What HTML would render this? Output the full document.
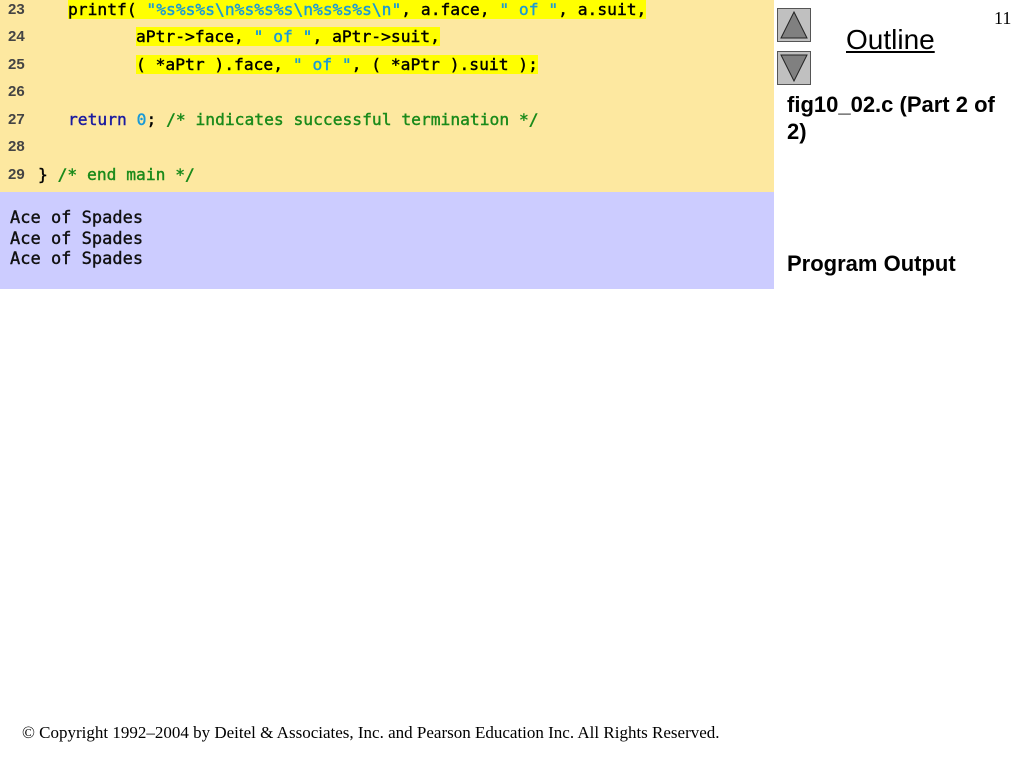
<!DOCTYPE html>
<html><head><meta charset="utf-8"><style>
body{margin:0;width:1024px;height:768px;background:#fff;position:relative;overflow:hidden;font-family:"Liberation Sans",sans-serif}
.code{position:absolute;left:0;top:0;width:774px;height:192px;background:#fde8a0}
.out{position:absolute;left:0;top:192px;width:774px;height:97px;background:#ccccff}
.ln{position:absolute;left:0;font-family:"DejaVu Sans Mono",monospace;font-size:16.3px;font-weight:normal;white-space:pre;line-height:20px;-webkit-text-stroke:0.4px currentColor}
.num{position:absolute;left:8px;font-family:"Liberation Sans",sans-serif;font-weight:bold;font-size:15px;color:#444;line-height:20px}
.hl{background:#ffff00}
.s{color:#1a9ad6}.k{color:#1a1aa0}.c{color:#1a8a1a}.z{color:#1a9ad6}
.btn{position:absolute;left:777px;width:34px;height:34px;background:#c0c0c0;border:1px solid #555;box-sizing:border-box}
</style></head><body>
<div class="code">
<div class="num" style="top:0px">23</div><div class="ln" style="left:68px;top:0px"><span class="hl">printf( <span class="s">"%s%s%s\n%s%s%s\n%s%s%s\n"</span>, a.face, <span class="s">" of "</span>, a.suit,</span></div>
<div class="num" style="top:27px">24</div><div class="ln" style="left:136px;top:27px"><span class="hl">aPtr-&gt;face, <span class="s">" of "</span>, aPtr-&gt;suit,</span></div>
<div class="num" style="top:55px">25</div><div class="ln" style="left:136px;top:55px"><span class="hl">( *aPtr ).face, <span class="s">" of "</span>, ( *aPtr ).suit );</span></div>
<div class="num" style="top:82px">26</div>
<div class="num" style="top:110px">27</div><div class="ln" style="left:68px;top:110px"><span class="k">return</span> <span class="z">0</span>; <span class="c">/* indicates successful termination */</span></div>
<div class="num" style="top:137px">28</div>
<div class="num" style="top:165px">29</div><div class="ln" style="left:38px;top:165px">} <span class="c">/* end main */</span></div>
</div>
<div class="out"><div class="ln" style="left:10px;top:16px;color:#111;font-size:17px;line-height:20.5px">Ace of Spades
Ace of Spades
Ace of Spades</div></div>
<div class="btn" style="top:8px"><svg width="32" height="32" style="position:absolute;left:0;top:0"><polygon points="16,3 29,29 3,29" fill="#808080" stroke="#222" stroke-width="1"/></svg></div>
<div class="btn" style="top:51px"><svg width="32" height="32" style="position:absolute;left:0;top:0"><polygon points="3,3 29,3 16,29" fill="#808080" stroke="#222" stroke-width="1"/></svg></div>
<div style="position:absolute;left:846px;top:24px;font-size:28px;text-decoration:underline;color:#000">Outline</div>
<div style="position:absolute;left:994px;top:8px;font-family:'Liberation Serif',serif;font-size:18px">11</div>
<div style="position:absolute;left:787px;top:91px;width:230px;font-weight:bold;font-size:22px;line-height:27px">fig10_02.c (Part 2 of 2)</div>
<div style="position:absolute;left:787px;top:251px;font-weight:bold;font-size:22px">Program Output</div>
<div style="position:absolute;left:22px;top:723px;font-family:'Liberation Serif',serif;font-size:17px">© Copyright 1992–2004 by Deitel &amp; Associates, Inc. and Pearson Education Inc. All Rights Reserved.</div>
</body></html>
